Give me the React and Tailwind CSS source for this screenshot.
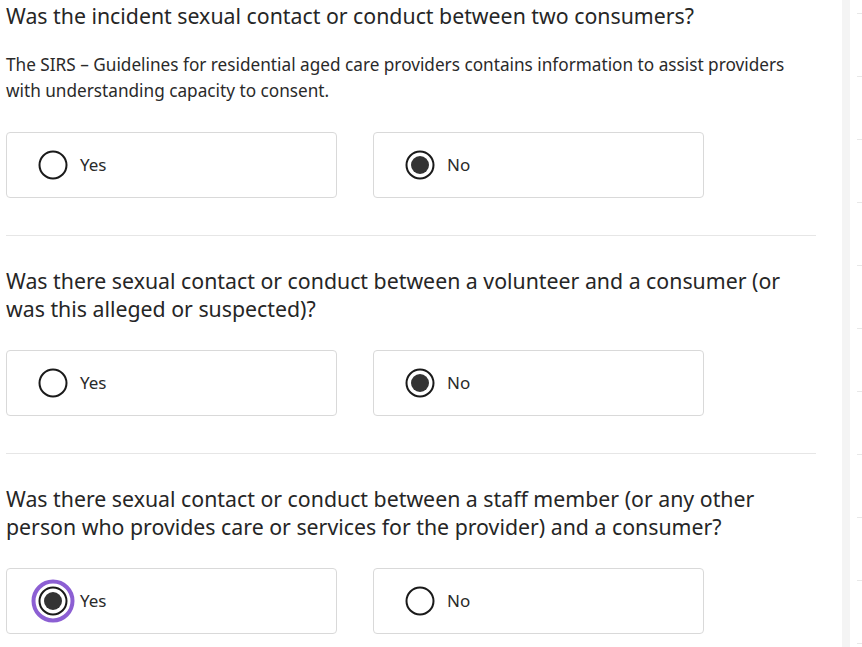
import React from "react";

const questions = [
    {
        id: "q1",
        title: "Was the incident sexual contact or conduct between two consumers?",
        hint: "The SIRS – Guidelines for residential aged care providers contains information to assist providers with understanding capacity to consent.",
        value: "No",
    },
    {
        id: "q2",
        title: "Was there sexual contact or conduct between a volunteer and a consumer (or was this alleged or suspected)?",
        value: "No",
    },
    {
        id: "q3",
        title: "Was there sexual contact or conduct between a staff member (or any other person who provides care or services for the provider) and a consumer?",
        value: "Yes",
        focused: true,
    },
];

function Radio({ checked, focused }) {
    return (
        <svg width="44" height="44" viewBox="0 0 44 44" className="shrink-0">
            {focused && <circle cx="22" cy="22" r="19.5" fill="none" stroke="#8c5fd3" strokeWidth="4" />}
            <circle cx="22" cy="22" r="13.5" fill="#fff" stroke="#1a1a1a" strokeWidth="2" />
            {checked && <circle cx="22" cy="22" r="9" fill="#333333" />}
        </svg>
    );
}

function Option({ label, checked, focused }) {
    return (
        <label className="flex items-center w-[331px] h-[66px] border border-[#d9d9d9] rounded-[4px] pl-[24px] bg-white cursor-pointer">
            <Radio checked={checked} focused={focused} />
            <span className="ml-[5px] text-[17px] text-[#2a2a2a]">{label}</span>
        </label>
    );
}

export default function App() {
    return (
        <div
            className="flex w-[862px] h-[647px] overflow-hidden bg-white text-[#262626]"
            style={{ fontFamily: '"Noto Sans", "Open Sans", sans-serif' }}
        >
            <main className="w-[816px] shrink-0 pl-[6px]">
                {questions.map((q, i) => (
                    <section
                        key={q.id}
                        className={`${i === 0 ? "pt-[2px]" : "pt-[31px]"} ${i < questions.length - 1 ? "pb-[37px] border-b border-[#e6e6e6]" : ""}`}
                    >
                        <h2 className="text-[21.3px] leading-[28px] font-normal">{q.title}</h2>
                        {q.hint && (
                            <p className="mt-[22px] text-[17.2px] leading-[26px] text-[#2a2a2a]">{q.hint}</p>
                        )}
                        <div className={`flex gap-[36px] ${q.hint ? "mt-[28px]" : "mt-[27px]"}`}>
                            <Option label="Yes" checked={q.value === "Yes"} focused={q.focused} />
                            <Option label="No" checked={q.value === "No"} />
                        </div>
                    </section>
                ))}
            </main>
            <div className="w-[26px] shrink-0" />
            <div className="w-[8px] shrink-0 bg-[#f4f4f4]" />
            <aside className="flex-1 pl-[7px] pt-[13px]">
                {Array.from({ length: 11 }).map((_, i) => (
                    <div key={i} className="h-[63px] border-t border-[#e8e8e8]" />
                ))}
            </aside>
        </div>
    );
}
